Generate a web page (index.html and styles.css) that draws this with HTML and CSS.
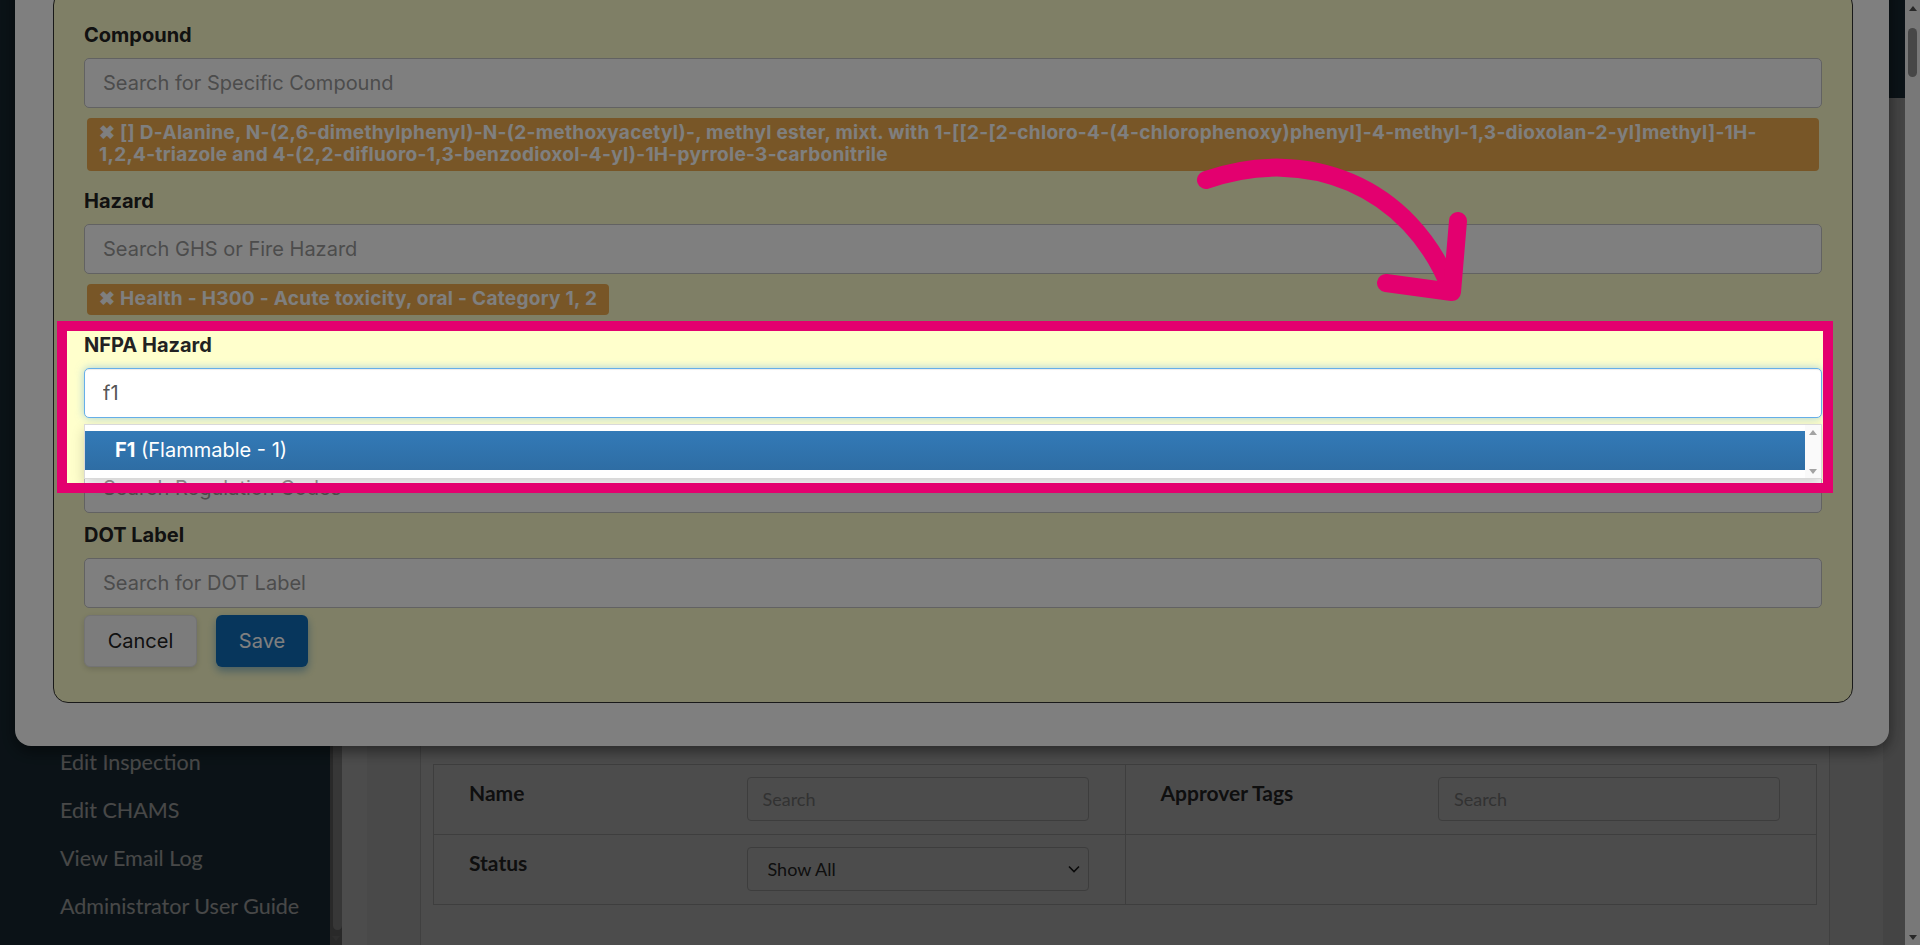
FILE: index.html
```html
<!DOCTYPE html>
<html lang="en">
<head>
    <meta charset="UTF-8">
    <meta name="viewport" content="width=device-width, initial-scale=1.0">
    <title>Approvers - Edit Filter</title>
    <link rel="stylesheet" href="styles.css">
</head>
<body>
    <div class="screen">
        <div class="app">
            <aside class="sidebar">
                <ul class="side-nav">
                    <li><a href="#">Manage Users</a></li>
                    <li><a href="#">Manage Approvers</a></li>
                    <li><a href="#">Manage Locations</a></li>
                    <li><a href="#">Edit Inspection</a></li>
                    <li><a href="#">Edit CHAMS</a></li>
                    <li><a href="#">View Email Log</a></li>
                    <li><a href="#">Administrator User Guide</a></li>
                </ul>
            </aside>
            <div class="side-scroll">
                <span class="side-thumb"></span>
                <span class="tri tri-down tri-light"></span>
            </div>
            <div class="main">
                <header class="topbar"></header>
                <div class="content">
                    <div class="content-inner">
                        <div class="card">
                            <table class="filter-table">
                                <tr>
                                    <td>
                                        <div class="filter-cell">
                                            <span class="filter-label">Name</span>
                                            <input class="filter-input" type="text" placeholder="Search">
                                        </div>
                                    </td>
                                    <td>
                                        <div class="filter-cell">
                                            <span class="filter-label">Approver Tags</span>
                                            <input class="filter-input" type="text" placeholder="Search">
                                        </div>
                                    </td>
                                </tr>
                                <tr>
                                    <td>
                                        <div class="filter-cell">
                                            <span class="filter-label">Status</span>
                                            <div class="filter-select">
                                                <span>Show All</span>
                                                <svg width="12" height="8" viewBox="0 0 12 8"><path d="M1 1.5l5 5 5-5" fill="none" stroke="#222" stroke-width="1.6"/></svg>
                                            </div>
                                        </div>
                                    </td>
                                    <td></td>
                                </tr>
                            </table>
                        </div>
                    </div>
                </div>
            </div>
        </div>
        <div class="page-scroll">
            <span class="tri tri-up"></span>
            <span class="page-thumb"></span>
            <span class="tri tri-down"></span>
        </div>
    </div>

    <!-- Edit filter dialog -->
    <div class="modal-backdrop"></div>
    <div class="modal">
        <div class="modal-panel">
            <div class="field">
                <label class="field-label">Compound</label>
                <input class="form-control" type="text" placeholder="Search for Specific Compound">
                <div class="tags">
                    <span class="tag">✖ [] D-Alanine, N-(2,6-dimethylphenyl)-N-(2-methoxyacetyl)-, methyl ester, mixt. with 1-[[2-[2-chloro-4-(4-chlorophenoxy)phenyl]-4-methyl-1,3-dioxolan-2-yl]methyl]-1H-1,2,4-triazole and 4-(2,2-difluoro-1,3-benzodioxol-4-yl)-1H-pyrrole-3-carbonitrile</span>
                </div>
            </div>
            <div class="field">
                <label class="field-label">Hazard</label>
                <input class="form-control" type="text" placeholder="Search GHS or Fire Hazard">
                <div class="tags">
                    <span class="tag">✖ Health - H300 - Acute toxicity, oral - Category 1, 2</span>
                </div>
            </div>
            <div class="field field-nfpa">
                <label class="field-label">NFPA Hazard</label>
                <input class="form-control is-focused" type="text" value="f1">
                <div class="ac-menu">
                    <ul class="ac-list">
                        <li class="ac-item active"><b>F1</b> (Flammable - 1)</li>
                    </ul>
                    <div class="ac-rail">
                        <span class="tri tri-up tri-soft"></span>
                        <span class="tri tri-down tri-soft"></span>
                    </div>
                </div>
            </div>
            <div class="field">
                <label class="field-label">Regulation Codes</label>
                <input class="form-control" type="text" placeholder="Search Regulation Codes">
            </div>
            <div class="field field-last">
                <label class="field-label">DOT Label</label>
                <input class="form-control" type="text" placeholder="Search for DOT Label">
            </div>
            <div class="form-actions">
                <button class="btn btn-cancel">Cancel</button>
                <button class="btn btn-save">Save</button>
            </div>
        </div>
    </div>

    <!-- walkthrough highlight -->
    <div class="spotlight"></div>
    <svg class="pointer-arrow" width="1920" height="945" viewBox="0 0 1920 945">
        <path d="M1206 180 C1306 145 1410 185 1451 290" fill="none" stroke="#e3006f" stroke-width="18" stroke-linecap="round"/>
        <path d="M1458 221 L1452 292 L1386 283" fill="none" stroke="#e3006f" stroke-width="18" stroke-linecap="round" stroke-linejoin="round"/>
    </svg>
</body>
</html>
```

FILE: styles.css
```css
* {
    margin: 0;
    padding: 0;
    box-sizing: border-box;
}

html, body {
    height: 100%;
    overflow: hidden;
}

body {
    font-family: Lato, "Liberation Sans", sans-serif;
    background: #fff;
}

.screen {
    display: flex;
    height: 100vh;
}

.app {
    flex: 1;
    display: flex;
    min-width: 0;
}

/* Sidebar */
.sidebar {
    width: 330px;
    flex: none;
    background: #253f4d;
    display: flex;
    flex-direction: column;
    justify-content: flex-end;
    padding: 0 0 15px 60px;
}

.side-nav {
    list-style: none;
}

.side-nav a {
    display: block;
    font-size: 21.5px;
    line-height: 48px;
    color: #f2f2f2;
    text-decoration: none;
    white-space: nowrap;
}

.side-scroll {
    width: 12px;
    flex: none;
    background: #8a8a8a;
    display: flex;
    flex-direction: column;
    align-items: flex-end;
    padding-bottom: 4px;
}

.side-thumb {
    flex: 1;
    width: 9px;
    background: #b8b8b8;
    border-radius: 0 0 5px 5px;
    margin-bottom: 6px;
}

.side-scroll .tri {
    align-self: center;
}

/* Little scrollbar arrows */
.tri {
    display: block;
    width: 0;
    height: 0;
    border-left: 4px solid transparent;
    border-right: 4px solid transparent;
}

.tri-up {
    border-bottom: 5px solid #505050;
}

.tri-down {
    border-top: 5px solid #505050;
}

.tri-light.tri-down {
    border-top-color: #9a9a9a;
}

/* Main area */
.main {
    flex: 1;
    display: flex;
    flex-direction: column;
    min-width: 0;
}

.topbar {
    height: 98px;
    flex: none;
    background: #253f4d;
}

.content {
    flex: 1;
    display: flex;
    padding-left: 25px;
    background: #fff;
    border-right: 22px solid #e4e4e4;
}

.content-inner {
    flex: 1;
    display: flex;
    padding: 0 53px;
    background: #f4f4f4;
}

.card {
    flex: 1;
    display: flex;
    flex-direction: column;
    justify-content: flex-end;
    background: #fff;
    border-left: 1px solid #d8d8d8;
    border-right: 1px solid #d8d8d8;
    padding: 0 12px 40px;
}

.filter-table {
    width: 100%;
    border-collapse: collapse;
}

.filter-table td {
    width: 50%;
    height: 70px;
    border: 1px solid #d0d0d0;
    padding: 12px 36px 12px 35px;
    vertical-align: top;
}

.filter-cell {
    display: flex;
    justify-content: space-between;
}

.filter-label {
    font-size: 21px;
    font-weight: 700;
    line-height: 26px;
    padding-top: 3px;
    color: #333;
}

.filter-input,
.filter-select {
    width: 342px;
    height: 44px;
    border: 1px solid #ccc;
    border-radius: 4px;
    padding: 0 15px;
    font-family: Lato, sans-serif;
    font-size: 18px;
    color: #333;
    background: #fff;
}

.filter-input::placeholder {
    color: #a8a8a8;
}

.filter-select {
    display: flex;
    align-items: center;
    justify-content: space-between;
    padding: 0 8px 0 20px;
}

/* Fake browser scrollbar */
.page-scroll {
    width: 15px;
    flex: none;
    background: #f1f1f1;
    display: flex;
    flex-direction: column;
    align-items: center;
    padding: 6px 0 5px;
}

.page-thumb {
    width: 9px;
    height: 49px;
    margin-top: 17px;
    background: #8e8e8e;
    border-radius: 5px;
}

.page-scroll .tri-down {
    margin-top: auto;
}

/* Dialog */
.modal-backdrop {
    position: fixed;
    top: 0;
    left: 0;
    bottom: 0;
    right: 15px;
    background: rgba(0, 0, 0, 0.4);
    z-index: 10;
}

.modal {
    position: fixed;
    top: -30px;
    left: 15px;
    width: 1874px;
    background: #fff;
    border-radius: 16px;
    padding: 20px 36px 43px 38px;
    box-shadow: 0 5px 15px rgba(0, 0, 0, 0.5);
    z-index: 20;
    font-family: Inter, "Liberation Sans", sans-serif;
}

.modal-panel {
    background: #ffffcc;
    border: 1px solid #333;
    border-radius: 15px;
    padding: 32px 30px 35px;
}

.field {
    margin-bottom: 10px;
}

.field-last {
    margin-bottom: 7px;
}

.field-nfpa {
    position: relative;
}

.field-label {
    display: block;
    font-size: 20px;
    font-weight: 700;
    line-height: 24px;
    color: #222;
    margin-bottom: 11px;
}

.form-control {
    display: block;
    width: 100%;
    height: 50px;
    padding: 0 18px;
    font-family: inherit;
    font-size: 20px;
    color: #555;
    background: #fff;
    border: 1px solid #c4c4c4;
    border-radius: 5px;
    outline: none;
}

.form-control::placeholder {
    color: #999;
}

.form-control.is-focused {
    border-color: #66afe9;
    box-shadow: inset 0 1px 1px rgba(0, 0, 0, 0.075), 0 0 8px rgba(102, 175, 233, 0.6);
}

.tags {
    display: flex;
    flex-wrap: wrap;
    padding: 10px 3px 8px;
}

.tag {
    background: #f0ad4e;
    color: #fff;
    font-size: 19px;
    font-weight: 700;
    letter-spacing: 0.3px;
    line-height: 22px;
    padding: 4px 12px 5px;
    border-radius: 4px;
}

/* Autocomplete dropdown */
.ac-menu {
    position: absolute;
    top: 91px;
    left: 0;
    right: 0;
    display: flex;
    background: #fff;
    border: 1px solid rgba(0, 0, 0, 0.15);
    box-shadow: 0 6px 12px rgba(0, 0, 0, 0.175);
    z-index: 5;
}

.ac-list {
    flex: 1;
    list-style: none;
    padding: 6px 0 8px;
}

.ac-item {
    height: 39px;
    line-height: 39px;
    padding-left: 30px;
    font-size: 20px;
    color: #fff;
}

.ac-item.active {
    background: linear-gradient(#337ab7, #2e6da4);
}

.ac-rail {
    width: 16px;
    background: #fafafa;
    display: flex;
    flex-direction: column;
    justify-content: space-between;
    align-items: center;
    padding: 5px 0 4px;
}

.tri-soft.tri-up {
    border-bottom-color: #a3a3a3;
}

.tri-soft.tri-down {
    border-top-color: #a3a3a3;
}

.form-actions {
    display: flex;
    gap: 19px;
}

.btn {
    height: 52px;
    border-radius: 6px;
    font-family: inherit;
    font-size: 20px;
    cursor: pointer;
}

.btn-cancel {
    width: 113px;
    background: #f9f9f9;
    color: #222;
    border: 1px solid #e6e6e6;
    box-shadow: 0 2px 6px rgba(0, 0, 0, 0.15);
}

.btn-save {
    width: 92px;
    background: #0e6cb8;
    color: #fff;
    border: none;
    box-shadow: 0 4px 9px rgba(14, 108, 184, 0.45);
}

/* Walkthrough highlight */
.spotlight {
    position: fixed;
    left: 57px;
    top: 321px;
    width: 1776px;
    height: 172px;
    border: 10px solid #e3006f;
    box-shadow: 0 0 0 3000px rgba(0, 0, 0, 0.5);
    z-index: 30;
    pointer-events: none;
}

.pointer-arrow {
    position: fixed;
    top: 0;
    left: 0;
    z-index: 40;
    pointer-events: none;
}
```
